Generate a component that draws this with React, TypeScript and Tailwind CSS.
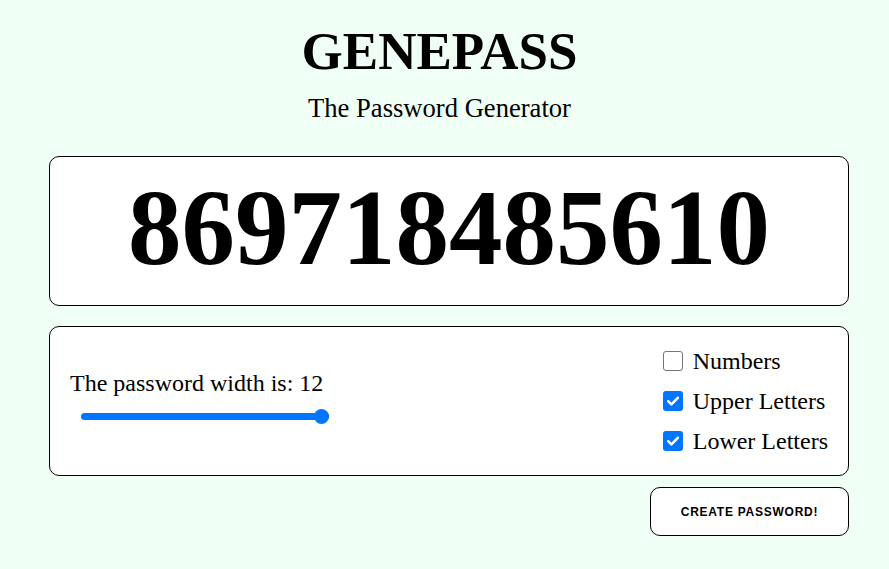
import React, { useState } from "react";

type Option = {
  label: string;
  checked: boolean;
};

const serif = "font-['Liberation_Serif','Times_New_Roman',serif]";

function CheckRow({ option, onToggle }: { option: Option; onToggle: () => void }) {
  return (
    <label className="flex items-center h-10 cursor-pointer">
      {option.checked ? (
        <span className="flex items-center justify-center w-5 h-5 rounded-[3px] bg-[#0075ff]">
          <svg viewBox="0 0 20 20" className="w-5 h-5" fill="none">
            <path
              d="M5.2 10.2l3.2 3.2 6.4-6.6"
              stroke="white"
              strokeWidth={2.6}
              strokeLinecap="round"
              strokeLinejoin="round"
            />
          </svg>
        </span>
      ) : (
        <span className="w-5 h-5 rounded-[3px] border border-[#767676] bg-white" />
      )}
      <input type="checkbox" className="hidden" checked={option.checked} onChange={onToggle} />
      <span className="ml-[10px] text-[24px] leading-[28px]">{option.label}</span>
    </label>
  );
}

export default function App() {
  const [options, setOptions] = useState<Option[]>([
    { label: "Numbers", checked: false },
    { label: "Upper Letters", checked: true },
    { label: "Lower Letters", checked: true },
  ]);
  const length = 12;

  return (
    <div className={`min-h-[569px] bg-[#f0fff5] text-black ${serif}`}>
      <div className="w-[879px] text-center pt-[21px]">
        <h1 className="text-[53px] leading-[60px] font-bold">GENEPASS</h1>
        <p className="mt-[12px] text-[26.6px] leading-[31px]">The Password Generator</p>
      </div>

      <div className="ml-[49px] w-[800px] mt-[32px]">
        <div className="flex items-center justify-center h-[150px] bg-white border border-black rounded-[10px]">
          <span className="text-[107px] leading-none font-bold pb-[6px]">869718485610</span>
        </div>

        <div className="flex items-center justify-between h-[150px] mt-[20px] px-[20px] bg-white border border-black rounded-[10px]">
          <div className="flex flex-col mb-[10px]">
            <span className="text-[24px] leading-[28px]">The password width is: {length}</span>
            <div className="relative ml-[11px] mt-[12px] w-[248px] h-[15px] flex items-center">
              <div className="w-full h-[7px] rounded-full bg-[#0075ff]" />
              <div className="absolute right-0 top-0 w-[15px] h-[15px] rounded-full bg-[#0075ff]" />
            </div>
          </div>

          <div className="flex flex-col">
            {options.map((o, i) => (
              <CheckRow
                key={o.label}
                option={o}
                onToggle={() =>
                  setOptions(options.map((x, j) => (j === i ? { ...x, checked: !x.checked } : x)))
                }
              />
            ))}
          </div>
        </div>

        <div className="flex justify-end mt-[11px]">
          <button className="w-[199px] h-[49px] bg-white border border-black rounded-[10px] font-['Liberation_Sans',Arial,sans-serif] font-bold text-[12px] tracking-[0.75px]">
            CREATE PASSWORD!
          </button>
        </div>
      </div>
    </div>
  );
}
